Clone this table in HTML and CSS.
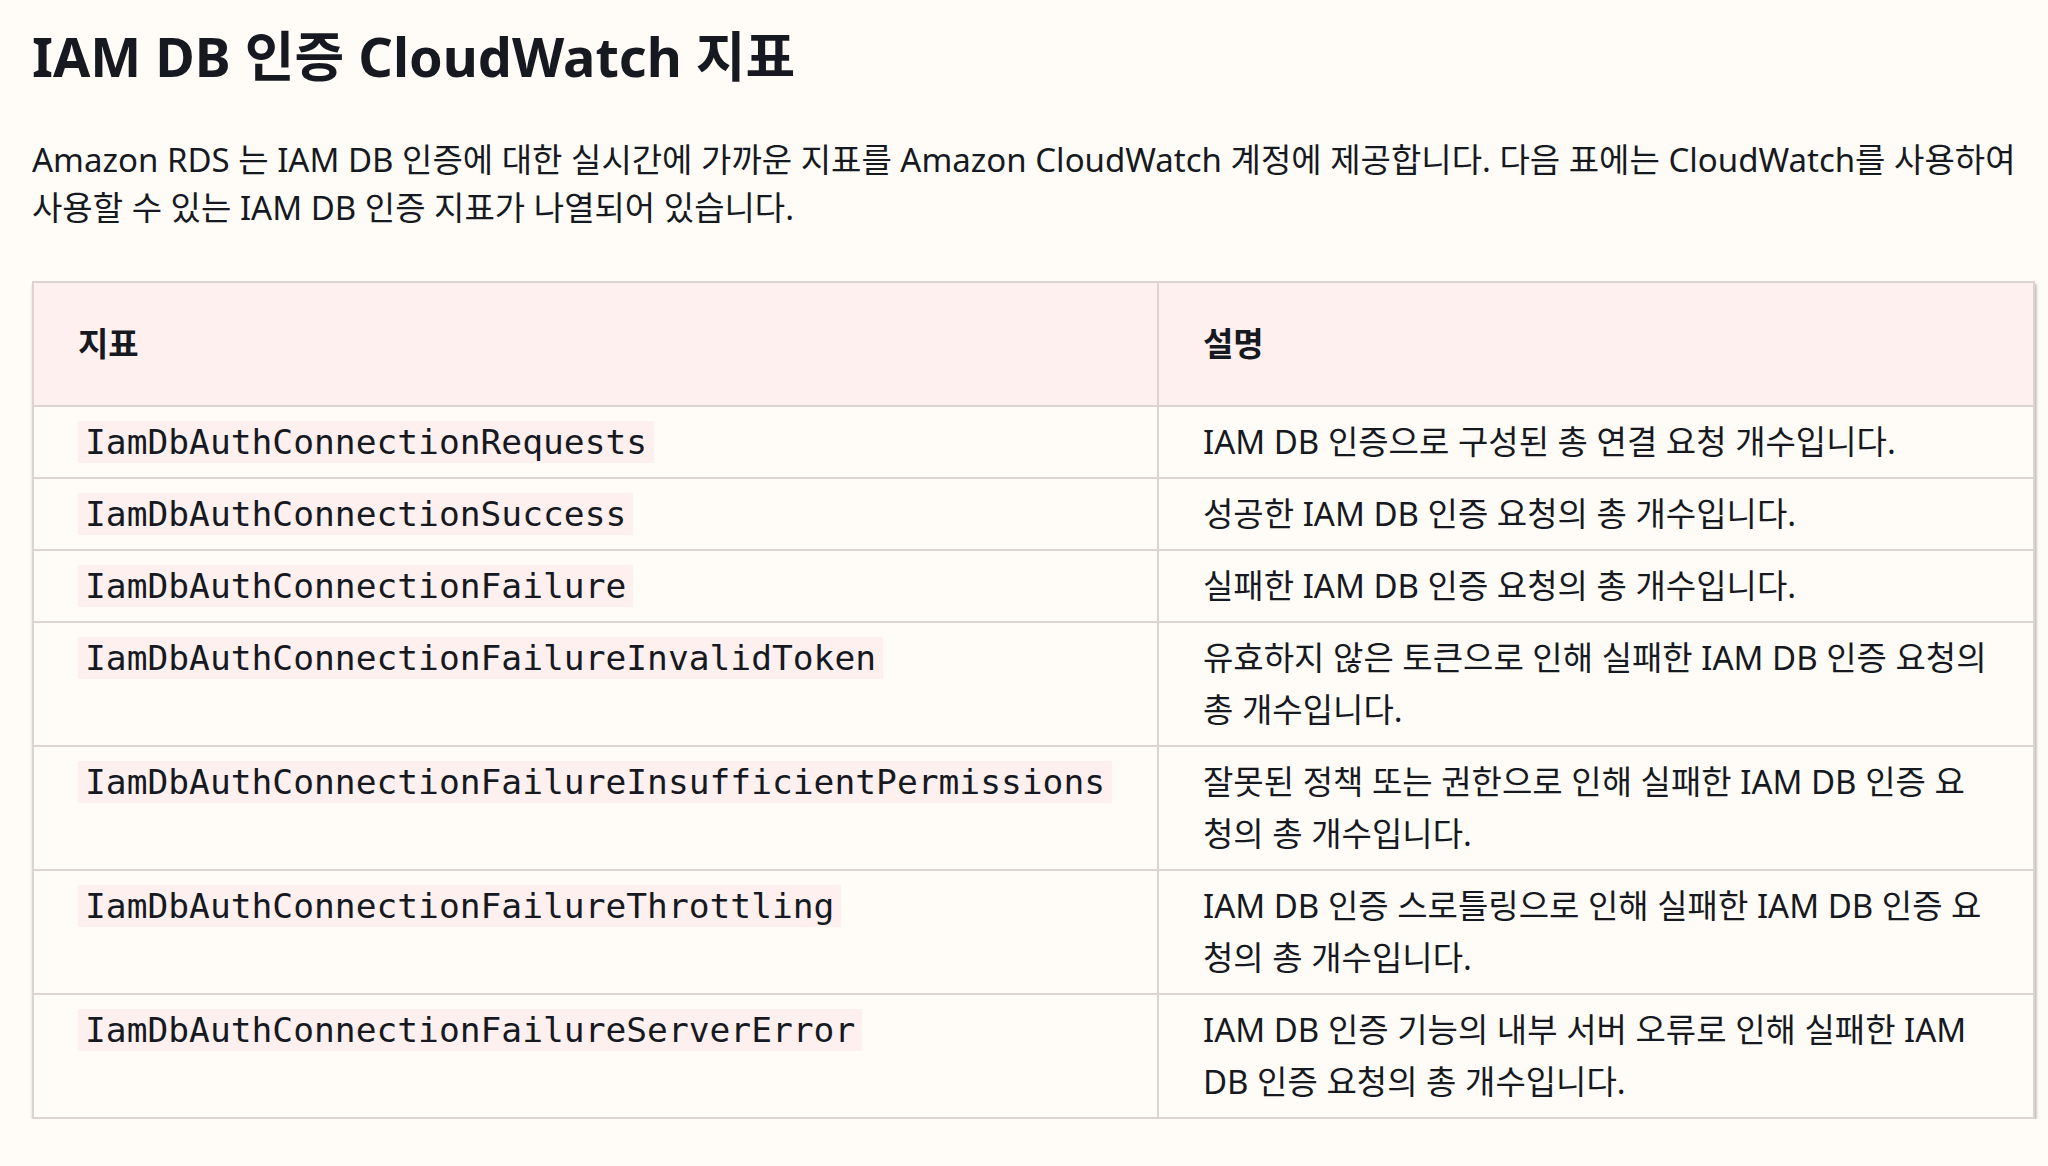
FILE: index.html
```html
<!DOCTYPE html>
<html lang="ko">
<head>
<meta charset="utf-8">
<title>IAM DB 인증 CloudWatch 지표</title>
<link rel="stylesheet" href="styles.css">
</head>
<body>
<main class="page">
  <h1 class="title">IAM DB 인증 CloudWatch 지표</h1>
  <p class="intro">Amazon RDS 는 IAM DB 인증에 대한 실시간에 가까운 지표를 Amazon CloudWatch 계정에 제공합니다. 다음 표에는 CloudWatch를 사용하여 사용할 수 있는 IAM DB 인증 지표가 나열되어 있습니다.</p>
  <div class="table-wrap">
    <table class="metrics">
      <colgroup>
        <col class="col-metric">
        <col class="col-desc">
      </colgroup>
      <thead>
        <tr><th>지표</th><th>설명</th></tr>
      </thead>
      <tbody>
        <tr><td><code>IamDbAuthConnectionRequests</code></td><td>IAM DB 인증으로 구성된 총 연결 요청 개수입니다.</td></tr>
        <tr><td><code>IamDbAuthConnectionSuccess</code></td><td>성공한 IAM DB 인증 요청의 총 개수입니다.</td></tr>
        <tr><td><code>IamDbAuthConnectionFailure</code></td><td>실패한 IAM DB 인증 요청의 총 개수입니다.</td></tr>
        <tr><td><code>IamDbAuthConnectionFailureInvalidToken</code></td><td>유효하지 않은 토큰으로 인해 실패한 IAM DB 인증 요청의 총 개수입니다.</td></tr>
        <tr><td><code>IamDbAuthConnectionFailureInsufficientPermissions</code></td><td>잘못된 정책 또는 권한으로 인해 실패한 IAM DB 인증 요청의 총 개수입니다.</td></tr>
        <tr><td><code>IamDbAuthConnectionFailureThrottling</code></td><td>IAM DB 인증 스로틀링으로 인해 실패한 IAM DB 인증 요청의 총 개수입니다.</td></tr>
        <tr><td><code>IamDbAuthConnectionFailureServerError</code></td><td>IAM DB 인증 기능의 내부 서버 오류로 인해 실패한 IAM DB 인증 요청의 총 개수입니다.</td></tr>
      </tbody>
    </table>
  </div>
</main>
</body>
</html>
```
FILE: styles.css
```css
html, body {
  margin: 0;
  padding: 0;
  background: #fffcf7;
}
body {
  color: #16191f;
  font-family: "Noto Sans", "Noto Sans CJK KR", sans-serif;
}
.page {
  width: 2001px;
  padding: 26px 0 0 32px;
}
.title {
  margin: 0;
  font-size: 54px;
  line-height: 60px;
  font-weight: 700;
}
.intro {
  margin: 50px 0 0;
  font-size: 33px;
  line-height: 48px;
}
.table-wrap {
  margin-top: 49px;
}
.metrics {
  width: 2001px;
  border-collapse: collapse;
  table-layout: fixed;
  box-shadow: 1px 3px 3px rgba(0, 0, 0, 0.35);
}
.col-metric { width: 1125px; }
.col-desc { width: 876px; }
.metrics th,
.metrics td {
  border: 2px solid #ddd3d2;
  text-align: left;
  vertical-align: top;
  font-size: 33px;
  line-height: 52px;
  padding: 9px 44px 9px 44px;
}
.metrics th {
  background: #fdf0ef;
  font-weight: 700;
  padding-top: 35px;
  padding-bottom: 35px;
}
.metrics td {
  background: #fffcf7;
}
.metrics code {
  font-family: "DejaVu Sans Mono", monospace;
  font-size: 34.6px;
  line-height: 1;
  background: #fdf0ef;
  padding: 1px 7px;
  white-space: nowrap;
}
```
